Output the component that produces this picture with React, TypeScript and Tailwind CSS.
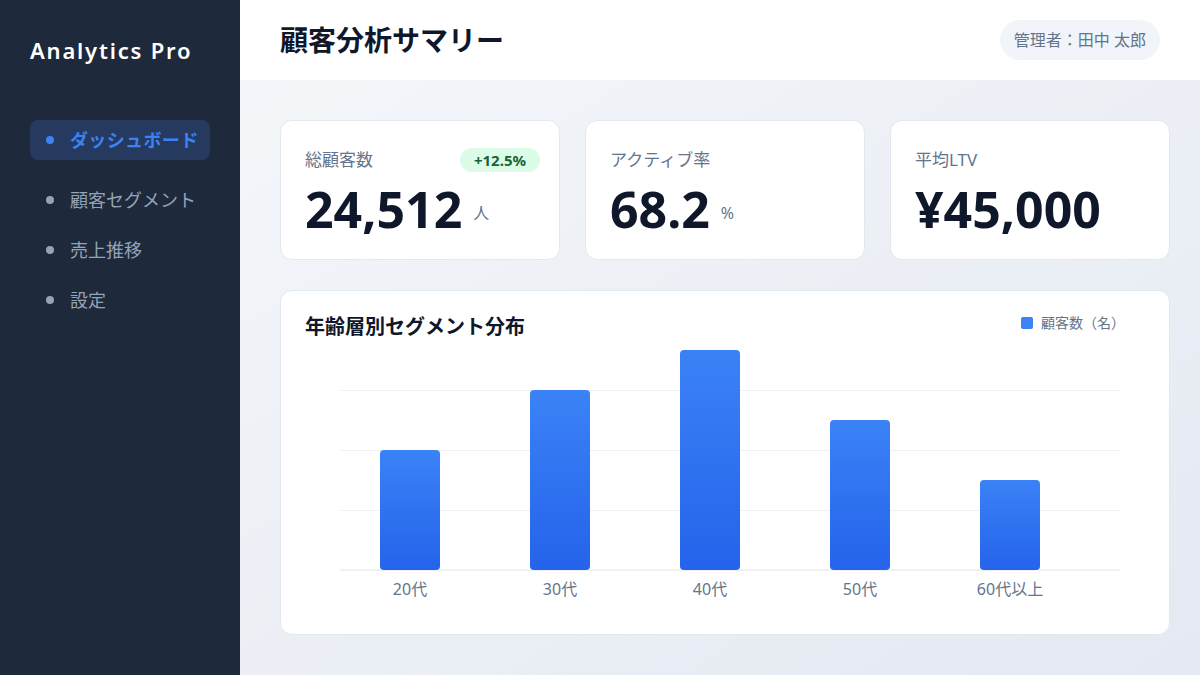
import React from "react";

const font = { fontFamily: '"Noto Sans", "Noto Sans CJK JP", sans-serif' };

function NavItem({ label, active }: { label: string; active?: boolean }) {
  return (
    <div
      className={
        active
          ? "flex h-[40px] items-center gap-4 rounded-lg bg-[#253a5e] pl-4 mb-[10px]"
          : "flex h-[40px] items-center gap-4 pl-4"
      }
    >
      <span
        className={
          active
            ? "h-[8px] w-[8px] rounded-full bg-[#3b82f6]"
            : "h-[8px] w-[8px] rounded-full bg-[#94a3b8]"
        }
      />
      <span
        className={
          active
            ? "text-[18px] font-bold text-[#3b82f6] tracking-[0.02em]"
            : "text-[18px] text-[#94a3b8]"
        }
      >
        {label}
      </span>
    </div>
  );
}

function StatCard({
  label,
  value,
  unit,
  badge,
}: {
  label: string;
  value: string;
  unit?: string;
  badge?: string;
}) {
  return (
    <div className="h-[140px] rounded-xl border border-[#e2e8f0] bg-white pl-[24px] pr-[19px] pt-[27px]">
      <div className="flex h-[24px] items-center justify-between">
        <span className="text-[17px] leading-[24px] text-[#64748b]">{label}</span>
        {badge && (
          <span className="flex h-[24px] items-center rounded-full bg-[#dcfce7] px-[14px] text-[15px] font-bold text-[#166534]">
            {badge}
          </span>
        )}
      </div>
      <div className="mt-[12px] flex items-end">
        <span className="text-[50px] font-bold leading-none text-[#0f172a]">{value}</span>
        {unit && (
          <span className="mb-[11px] ml-[11px] text-[16px] leading-[20px] text-[#64748b]">{unit}</span>
        )}
      </div>
    </div>
  );
}

const bars = [
  { label: "20代", h: 120 },
  { label: "30代", h: 180 },
  { label: "40代", h: 220 },
  { label: "50代", h: 150 },
  { label: "60代以上", h: 90 },
];

export default function App() {
  return (
    <div className="flex h-[675px] w-[1200px] overflow-hidden" style={font}>
      <aside className="h-full w-[240px] shrink-0 bg-[#1e293b] px-[30px] pt-[34px]">
        <div className="text-[22px] font-semibold leading-[32px] text-white tracking-[1.8px]">
          Analytics Pro
        </div>
        <nav className="mt-[54px] flex flex-col gap-[10px]">
          <NavItem label="ダッシュボード" active />
          <NavItem label="顧客セグメント" />
          <NavItem label="売上推移" />
          <NavItem label="設定" />
        </nav>
      </aside>
      <div className="flex min-w-0 flex-1 flex-col">
        <header className="flex h-[80px] shrink-0 items-center justify-between bg-white px-[40px]">
          <h1 className="text-[28px] font-bold text-[#0f172a]">顧客分析サマリー</h1>
          <div className="flex h-[40px] items-center rounded-full bg-[#f1f5f9] px-[14px] text-[16px] text-[#64748b]">
            管理者：田中 太郎
          </div>
        </header>
        <main className="flex-1 bg-gradient-to-br from-[#f3f6f9] to-[#e4e9f2] pl-[40px] pr-[30px] pt-[40px]">
          <div className="grid grid-cols-3 gap-[25px]">
            <StatCard label="総顧客数" value="24,512" unit="人" badge="+12.5%" />
            <StatCard label="アクティブ率" value="68.2" unit="%" />
            <StatCard label="平均LTV" value="¥45,000" />
          </div>
          <div className="mt-[30px] h-[345px] rounded-xl border border-[#e2e8f0] bg-white pl-[24px] pr-[24px] pt-[22px]">
            <div className="flex items-start justify-between pr-[20px]">
              <h2 className="text-[20px] font-bold leading-[28px] text-[#0f172a]">
                年齢層別セグメント分布
              </h2>
              <div className="flex h-[18px] items-center gap-[8px] pt-[1px]">
                <span className="h-[12px] w-[12px] rounded-[2px] bg-[#3b82f6]" />
                <span className="text-[14px] text-[#64748b]">顧客数（名）</span>
              </div>
            </div>
            <div className="ml-[35px] mr-[25px] mt-[9px]">
              <div className="relative h-[220px]">
                <div className="absolute left-0 right-0 top-[40px] h-px bg-[#eef2f6]" />
                <div className="absolute left-0 right-0 top-[100px] h-px bg-[#eef2f6]" />
                <div className="absolute left-0 right-0 top-[160px] h-px bg-[#eef2f6]" />
                <div className="absolute left-0 right-0 top-[219px] h-[2px] bg-[#eef2f6]" />
                <div className="relative flex h-full items-end gap-[90px] pl-[40px]">
                  {bars.map((b) => (
                    <div
                      key={b.label}
                      className="w-[60px] rounded-[4px] bg-gradient-to-b from-[#3b82f6] to-[#2563eb]"
                      style={{ height: b.h }}
                    />
                  ))}
                </div>
              </div>
              <div className="mt-[7px] flex gap-[90px] pl-[40px]">
                {bars.map((b) => (
                  <div
                    key={b.label}
                    className="flex w-[60px] justify-center whitespace-nowrap text-[16px] leading-[24px] text-[#64748b]"
                  >
                    {b.label}
                  </div>
                ))}
              </div>
            </div>
          </div>
        </main>
      </div>
    </div>
  );
}
